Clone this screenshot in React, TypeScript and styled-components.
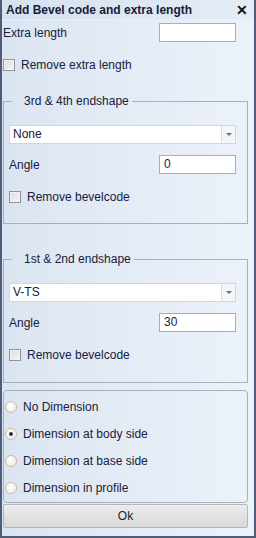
import React from 'react';
import styled, { createGlobalStyle } from 'styled-components';

const GlobalStyle = createGlobalStyle`
    html, body {
        margin: 0;
        padding: 0;
        background: #ffffff;
    }
    * {
        box-sizing: border-box;
    }
`;

const Window = styled.div`
    width: 256px;
    height: 538px;
    display: flex;
    flex-direction: column;
    border: 2px solid #4f5c78;
    border-top: none;
    background: linear-gradient(to right, #dbe5f1, #ecf2fa);
    font-family: 'Liberation Sans', Arial, sans-serif;
    font-size: 12px;
    color: #18203a;
`;

const TitleBar = styled.div`
    height: 20px;
    flex: none;
    display: flex;
    align-items: center;
    justify-content: space-between;
    padding: 0 6px 0 4px;
    background: linear-gradient(to right, #d6e1ef, #e4ecf6);
    border-bottom: 1px solid #e9eff8;
    font-weight: bold;
    color: #16203a;
`;

const CloseButton = styled.span`
    font-size: 14px;
    font-weight: bold;
    line-height: 1;
    color: #111;
`;

const Body = styled.div`
    flex: 1;
    display: flex;
    flex-direction: column;
    padding: 3px 6px 8px 1px;
`;

const FieldRow = styled.div<{ $indent?: number }>`
    display: flex;
    align-items: center;
    justify-content: space-between;
    height: 19px;
    padding-right: ${(props) => props.$indent ?? 0}px;
`;

const TextInput = styled.div`
    width: 77px;
    height: 19px;
    background: #ffffff;
    border: 1px solid #abadb3;
    padding: 1px 4px;
    line-height: 15px;
    font-size: 12px;
`;

const CheckRow = styled.label<{ $top: number }>`
    display: flex;
    align-items: center;
    gap: 6px;
    height: 16px;
    margin-top: ${(props) => props.$top}px;
`;

const CheckBox = styled.span`
    width: 12px;
    height: 12px;
    border: 1px solid #8e949c;
    background: linear-gradient(135deg, #dcdcdc, #f6f6f6);
    box-shadow: inset 0 0 0 1px #f2f2f2;
`;

const Group = styled.fieldset<{ $top: number; $bottom: number }>`
    margin: ${(props) => props.$top}px 0 0 0;
    padding: 17px 11px ${(props) => props.$bottom}px 5px;
    border: 1px solid #a6b0bd;
    min-width: 0;
`;

const Legend = styled.legend`
    margin-left: 3px;
    padding: 0 3px 0 12px;
    font-size: 12px;
    line-height: 14px;
`;

const Select = styled.div`
    height: 19px;
    display: flex;
    align-items: stretch;
    background: #ffffff;
    border: 1px solid #d3d7dd;
    margin-bottom: 11px;
`;

const SelectValue = styled.div`
    flex: 1;
    padding-left: 3px;
    line-height: 17px;
`;

const SelectArrow = styled.div`
    width: 14px;
    display: flex;
    align-items: center;
    justify-content: center;
    background: #f4f5f7;
    border-left: 1px solid #d9dce1;
    &::after {
        content: '';
        border-left: 3px solid transparent;
        border-right: 3px solid transparent;
        border-top: 3px solid #6a6d73;
    }
`;

const RadioBox = styled.div`
    margin-top: 7px;
    border: 1px solid #a6b0bd;
    border-radius: 4px;
    padding: 8px 0 6px 1px;
    display: flex;
    flex-direction: column;
    gap: 11px;
`;

const RadioRow = styled.div`
    display: flex;
    align-items: center;
    gap: 6px;
    height: 16px;
`;

const RadioDot = styled.span<{ $checked?: boolean }>`
    width: 12px;
    height: 12px;
    border-radius: 50%;
    border: 1px solid #d6b79c;
    background: radial-gradient(circle at 40% 40%, #ffffff, #ece7e2);
    display: flex;
    align-items: center;
    justify-content: center;
    &::after {
        content: '';
        display: ${(props) => (props.$checked ? 'block' : 'none')};
        width: 4px;
        height: 4px;
        border-radius: 50%;
        background: #2c3345;
    }
`;

const OkButton = styled.div`
    margin-top: 1px;
    height: 24px;
    display: flex;
    align-items: center;
    justify-content: center;
    border: 1px solid #b3b6bb;
    border-radius: 2px;
    background: linear-gradient(to bottom, #ececec, #d9d9d9);
`;

type Shape = {
    title: string;
    value: string;
    angle: string;
    top: number;
    bottom: number;
};

const shapes: Shape[] = [
    { title: '3rd & 4th endshape', value: 'None', angle: '0', top: 21, bottom: 18 },
    { title: '1st & 2nd endshape', value: 'V-TS', angle: '30', top: 28, bottom: 19 },
];

const dimensions = [
    { label: 'No Dimension', checked: false },
    { label: 'Dimension at body side', checked: true },
    { label: 'Dimension at base side', checked: false },
    { label: 'Dimension in profile', checked: false },
];

function App() {
    return (
        <>
            <GlobalStyle />
            <Window>
                <TitleBar>
                    <span>Add Bevel code and extra length</span>
                    <CloseButton>✕</CloseButton>
                </TitleBar>
                <Body>
                    <FieldRow $indent={12}>
                        <span>Extra length</span>
                        <TextInput />
                    </FieldRow>
                    <CheckRow $top={15}>
                        <CheckBox />
                        <span>Remove extra length</span>
                    </CheckRow>
                    {shapes.map((shape) => (
                        <Group key={shape.title} $top={shape.top} $bottom={shape.bottom}>
                            <Legend>{shape.title}</Legend>
                            <Select>
                                <SelectValue>{shape.value}</SelectValue>
                                <SelectArrow />
                            </Select>
                            <FieldRow>
                                <span>Angle</span>
                                <TextInput>{shape.angle}</TextInput>
                            </FieldRow>
                            <CheckRow $top={15}>
                                <CheckBox />
                                <span>Remove bevelcode</span>
                            </CheckRow>
                        </Group>
                    ))}
                    <RadioBox>
                        {dimensions.map((d) => (
                            <RadioRow key={d.label}>
                                <RadioDot $checked={d.checked} />
                                <span>{d.label}</span>
                            </RadioRow>
                        ))}
                    </RadioBox>
                    <OkButton>Ok</OkButton>
                </Body>
            </Window>
        </>
    );
}

export default App;
